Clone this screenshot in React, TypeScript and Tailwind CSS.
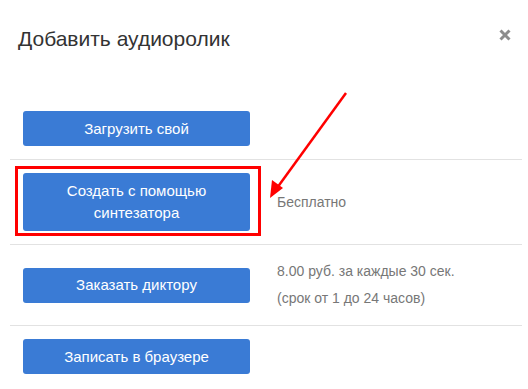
import React from "react";

const btn =
  "w-[227px] rounded-[3px] bg-[#3a7bd5] text-white text-[15px] leading-[22px] flex items-center justify-center text-center shrink-0";

export default function App() {
  return (
    <div
      className="relative w-[528px] h-[389px] bg-white overflow-hidden"
      style={{ fontFamily: '"Liberation Sans", Arial, sans-serif' }}
    >
      {/* Header */}
      <div className="flex items-start justify-between pl-[18px] pr-[17px] pt-[27px] h-[98px]">
        <h1 className="text-[21px] leading-[24px] text-[#333333]">Добавить аудиоролик</h1>
        <button className="mt-[2px] w-[12px] h-[12px] text-[#8c8c8c]" aria-label="close">
          <svg width="12" height="12" viewBox="0 0 12 12">
            <path d="M1.5 1.5 L10.5 10.5 M10.5 1.5 L1.5 10.5" stroke="currentColor" strokeWidth="3" strokeLinecap="butt" />
          </svg>
        </button>
      </div>

      {/* Rows */}
      <div className="ml-[10px] w-[512px] flex flex-col">
        <div className="flex items-center pl-[13px] py-[13px]">
          <div className={`${btn} h-[35px]`}>Загрузить свой</div>
        </div>
        <div className="flex items-center pl-[13px] py-[13px] border-t border-[#e2e2e2]">
          <div className={`${btn} h-[58px] px-[30px]`}>Создать с помощью синтезатора</div>
          <div className="ml-[27px] text-[14px] text-[#777777] leading-[20px]">Бесплатно</div>
        </div>
        <div className="flex items-center pl-[13px] py-[13px] border-t border-[#e2e2e2]">
          <div className={`${btn} h-[35px]`}>Заказать диктору</div>
          <div className="ml-[27px] text-[14px] text-[#777777] leading-[27px]">
            <div>8.00 руб. за каждые 30 сек.</div>
            <div>(срок от 1 до 24 часов)</div>
          </div>
        </div>
        <div className="flex items-center pl-[13px] py-[13px] border-t border-[#e2e2e2]">
          <div className={`${btn} h-[35px]`}>Записать в браузере</div>
        </div>
      </div>

      {/* Annotation: red box */}
      <div className="absolute left-[15px] top-[166px] w-[246px] h-[70px] border-[3px] border-[#ff0000] pointer-events-none" />

      {/* Annotation: arrow */}
      <svg className="absolute left-0 top-0 pointer-events-none" width="528" height="389">
        <line x1="346" y1="93" x2="277" y2="188" stroke="#ff0000" strokeWidth="2.5" />
        <polygon points="270,198 272,180 283,188" fill="#ff0000" />
      </svg>
    </div>
  );
}
